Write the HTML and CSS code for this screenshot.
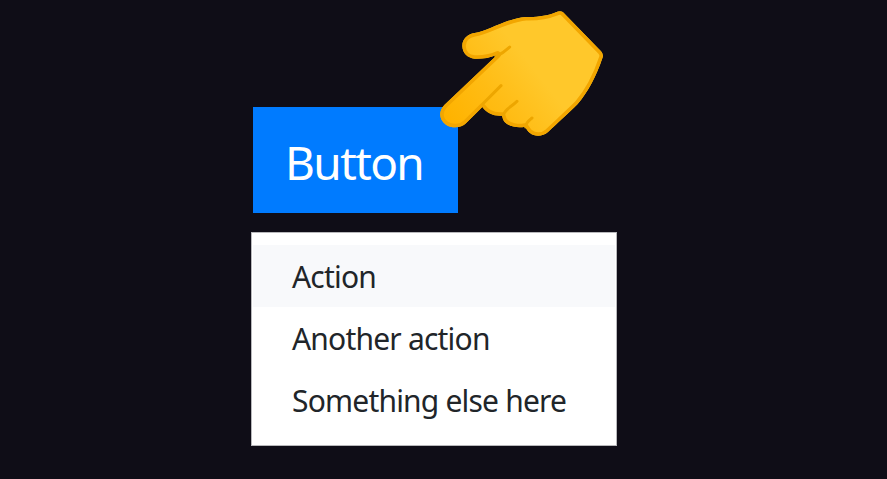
FILE: index.html
```html
<!DOCTYPE html>
<html lang="en">
<head>
<meta charset="utf-8">
<title>Dropdown</title>
<link rel="stylesheet" href="styles.css">
</head>
<body>
<main class="dropdown">
  <div class="trigger">
    <button class="button" type="button"><span>Button</span></button>
    <svg class="hand" viewBox="0 0 570 435" aria-hidden="true">
      <defs>
        <linearGradient id="skin" gradientUnits="userSpaceOnUse" x1="60" y1="360" x2="290" y2="180">
          <stop offset="0" stop-color="#ffb300"/>
          <stop offset="0.5" stop-color="#ffbc14"/>
          <stop offset="1" stop-color="#ffc82b"/>
        </linearGradient>
        <path id="shape" d="M390 34C397 34 400 38 405 43L513 154Q521 163 518 172C499 229 475 275 443 312C419 336 377 374 354 396C337 411 313 410 300 399C293 394 289 386 285 380C265 385 237 380 224 366C219 360 218 353 216 347C193 349 170 340 157 321L108 370C94 384 66 386 48 374C27 359 25 334 43 315L202 164C178 174 154 177 134 176C112 174 98 159 97 139C96 118 112 102 134 99C176 94 226 56 288 51C324 52 351 48 378 37Q384 34 390 34Z"/>
        <clipPath id="outline"><use href="#shape"/></clipPath>
      </defs>
      <use href="#shape" fill="url(#skin)"/>
      <g clip-path="url(#outline)">
        <use href="#shape" fill="none" stroke="#f2a600" stroke-width="21" stroke-linejoin="round"/>
      </g>
      <path d="M198 170Q222 157 239 141M158 312L213 257M220 345C225 326 246 320 261 304M287 381C287 368 296 362 306 354" fill="none" stroke="#eda600" stroke-width="9" stroke-linecap="round"/>
    </svg>
  </div>
  <ul class="menu">
    <li class="item item-active"><span class="action">Action</span></li>
    <li class="item"><span class="another">Another action</span></li>
    <li class="item"><span class="something">Something else here</span></li>
  </ul>
</main>
</body>
</html>
```
FILE: styles.css
```css
* { box-sizing: border-box; }
body {
  margin: 0;
  min-height: 479px;
  background: #0f0d17;
  font-family: "Open Sans", "Noto Sans", sans-serif;
}
.dropdown {
  width: 366px;
  margin-left: 251px;
  padding-top: 107px;
}
.trigger {
  position: relative;
  width: 205px;
  height: 106px;
  margin-left: 2px;
}
.button {
  display: block;
  width: 100%;
  height: 100%;
  padding: 4px 0 0 32px;
  border: 0;
  background: #007bff;
  color: #fff;
  font: 400 46px/60px "Noto Sans", sans-serif;
  letter-spacing: -1.6px;
  text-align: left;
}
.hand {
  position: absolute;
  left: 177px;
  top: -107px;
  width: 190px;
  height: 145px;
}
.menu {
  height: 214px;
  margin: 19px 0 0;
  padding: 12px 1px 0;
  border: 1px solid #b8b8bb;
  background: #fff;
  list-style: none;
}
.item {
  display: flex;
  align-items: center;
  height: 62px;
  padding: 2px 0 0 39px;
  color: #212529;
  font: 400 30px/40px "Noto Sans", sans-serif;
  white-space: nowrap;
}
.item-active { background: #f8f9fb; }
.action { letter-spacing: -0.8px; }
.another { letter-spacing: -0.8px; }
.something { letter-spacing: -0.8px; }
```
